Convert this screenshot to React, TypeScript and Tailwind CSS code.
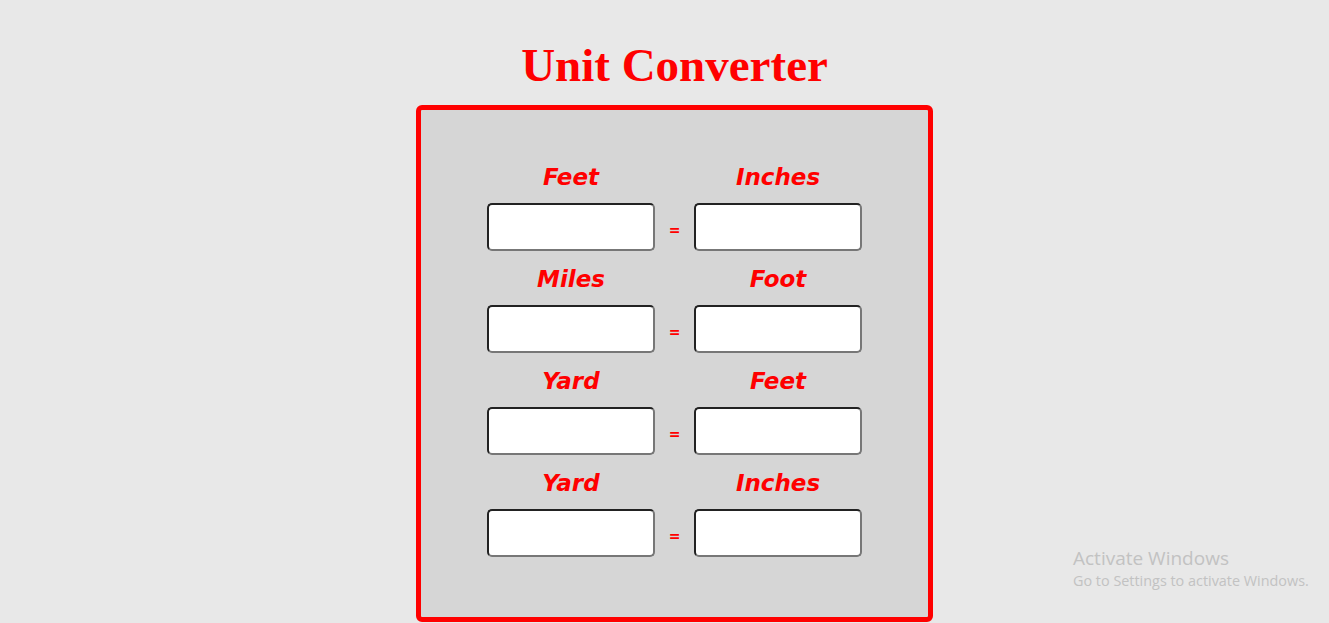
import { Fragment } from 'react';

const pairs = [
  { from: 'Feet', to: 'Inches' },
  { from: 'Miles', to: 'Foot' },
  { from: 'Yard', to: 'Feet' },
  { from: 'Yard', to: 'Inches' },
];

const inputClass =
  'w-[168px] h-[48px] bg-white rounded-[5px] border-2 border-t-[#222] border-l-[#222] border-b-[#777] border-r-[#777] outline-none px-2';

export default function App() {
  return (
    <div className="relative min-h-screen w-full bg-[#e8e8e8] pl-[20px] flex flex-col items-center overflow-hidden">
      <h1 className="mt-[42px] h-[47px] leading-none text-[47px] font-bold text-[#ff0000] font-['Liberation_Serif',serif]">
        Unit Converter
      </h1>

      <div className="mt-[16px] w-[517px] h-[517px] bg-[#d6d6d6] border-[5px] border-[#ff0000] rounded-[6px] pt-[51px] flex flex-col items-center">
        <div className="grid grid-cols-[168px_39px_168px] gap-y-[12px] font-['DejaVu_Sans',sans-serif]">
          {pairs.map((p, i) => (
            <Fragment key={i}>
              <div className="h-[30px] leading-[32px] text-center text-[23px] font-bold italic text-[#ff0000]">
                {p.from}
              </div>
              <div />
              <div className="h-[30px] leading-[32px] text-center text-[23px] font-bold italic text-[#ff0000]">
                {p.to}
              </div>

              <input type="text" className={inputClass} />
              <div className="flex items-center justify-center pt-[6px] text-[14px] font-bold italic text-[#ff0000]">
                =
              </div>
              <input type="text" className={inputClass} />
            </Fragment>
          ))}
        </div>
      </div>

      <div className="absolute left-[1073px] top-[546px] text-[#c2c2c2] font-['Open_Sans',sans-serif] pointer-events-none">
        <div className="text-[19px] leading-[25px]">Activate Windows</div>
        <div className="text-[14.4px] leading-[20px]">Go to Settings to activate Windows.</div>
      </div>
    </div>
  );
}
